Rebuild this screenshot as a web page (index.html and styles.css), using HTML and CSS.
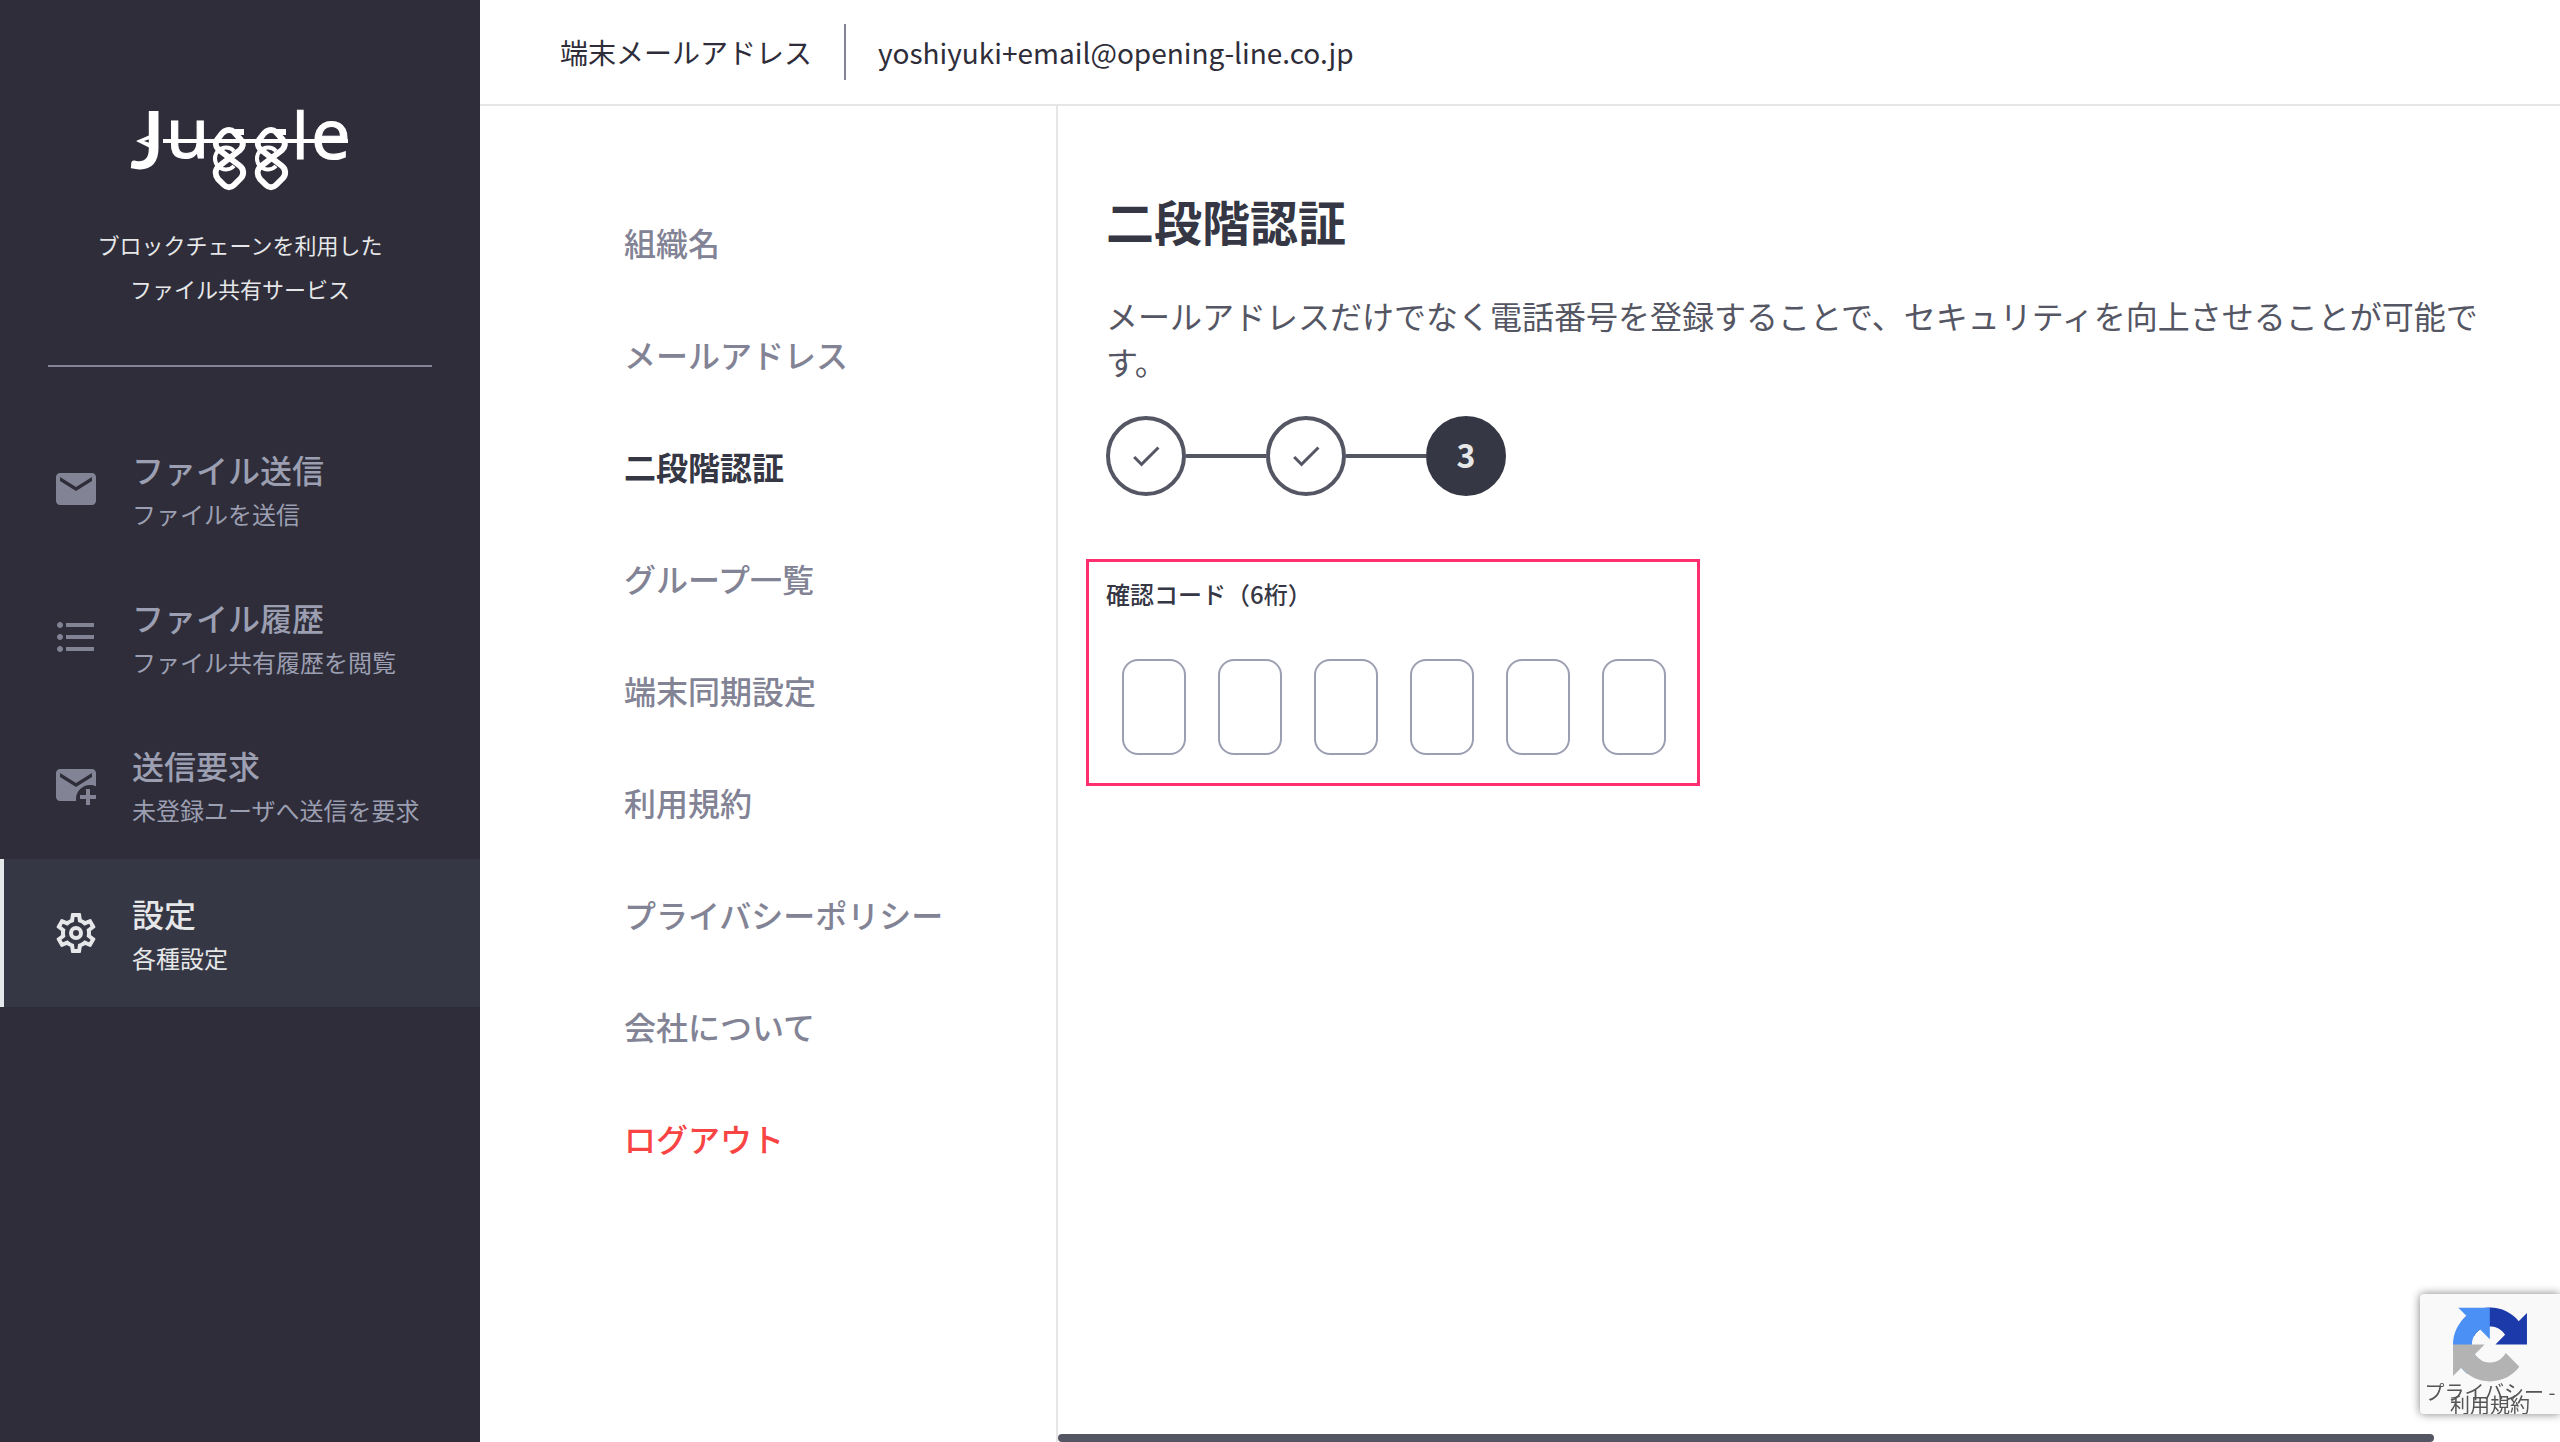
FILE: index.html
```html
<!DOCTYPE html>
<html lang="ja">
<head>
    <meta charset="UTF-8">
    <meta name="viewport" content="width=device-width, initial-scale=1.0">
    <title>Juggle</title>
    <link rel="stylesheet" href="styles.css">
</head>
<body>
    <!-- サイドバー -->
    <aside class="sidebar">
        <div class="brand">
            <svg class="logo" viewBox="0 0 220 84" role="img" aria-label="Juggle">
                <g class="logo-text">
                    <text class="logo-j" x="1" y="60">J</text>
                    <text x="36" y="50">u</text>
                    <text class="logo-l" x="162" y="51">l</text>
                    <text x="181" y="51">e</text>
                </g>
                <path fill="#fff" d="M6 33l14-6v4l-6 2 6 2v5z"/>
                <path fill="#fff" d="M33 31h185v4H33z"/>
                <g id="link" fill="none" stroke="#fff">
                    <path stroke-width="6" d="M114 24H103M99 22C95 22 92 25 90 28L87 32C85 35 86 39 88 41L110 58C114 61 114 67 111 70L104 77C101 80 97 80 94 77L88 71C85 67 85 62 88 59L110 42C113 39 114 35 111 32L104 24C102 22 101 22 99 22z"/>
                    <path stroke-width="4" d="M104 43a11 11 0 1 0 0 15"/>
                </g>
                <use href="#link" x="42"/>
            </svg>
            <p class="tagline">ブロックチェーンを利用した<br>ファイル共有サービス</p>
        </div>
        <nav class="main-nav">
            <a href="#" class="nav-item">
                <svg class="nav-icon" viewBox="0 0 24 24"><path d="M20 4H4c-1.100 0-1.990.9-1.990 2L2 18c0 1.100.9 2 2 2h16c1.100 0 2-.9 2-2V6c0-1.100-.9-2-2-2zm0 4l-8 5-8-5V6l8 5 8-5v2z"/></svg>
                <span class="nav-text">
                    <span class="nav-title">ファイル送信</span>
                    <span class="nav-desc">ファイルを送信</span>
                </span>
            </a>
            <a href="#" class="nav-item">
                <svg class="nav-icon" viewBox="0 0 24 24"><path d="M4 10.500c-.83 0-1.500.67-1.500 1.500s.67 1.500 1.500 1.500 1.500-.67 1.500-1.500-.67-1.500-1.500-1.500zm0-6c-.83 0-1.500.67-1.500 1.500S3.170 7.500 4 7.500 5.500 6.830 5.500 6 4.830 4.500 4 4.500zm0 12c-.83 0-1.500.68-1.500 1.500s.68 1.500 1.500 1.500 1.500-.68 1.500-1.500-.67-1.500-1.500-1.500zM7 19h14v-2H7v2zm0-6h14v-2H7v2zm0-8v2h14V5H7z"/></svg>
                <span class="nav-text">
                    <span class="nav-title">ファイル履歴</span>
                    <span class="nav-desc">ファイル共有履歴を閲覧</span>
                </span>
            </a>
            <a href="#" class="nav-item">
                <svg class="nav-icon" viewBox="0 0 24 24"><path d="M20 4H4c-1.100 0-2 .9-2 2v12c0 1.100.9 2 2 2h8.080c-.05-.33-.08-.66-.08-1 0-3.870 3.130-7 7-7 1.070 0 2.090.24 3 .68V6c0-1.100-.9-2-2-2zm0 4l-8 5-8-5V6l8 5 8-5v2zM19 14h-2v3h-3v2h3v3h2v-3h3v-2h-3z"/></svg>
                <span class="nav-text">
                    <span class="nav-title">送信要求</span>
                    <span class="nav-desc">未登録ユーザへ送信を要求</span>
                </span>
            </a>
            <a href="#" class="nav-item active">
                <svg class="nav-icon" viewBox="0 0 24 24"><path d="M19.430 12.980c.04-.32.07-.64.07-.98s-.03-.66-.07-.98l2.110-1.650c.19-.15.24-.42.12-.64l-2-3.460c-.09-.16-.26-.25-.44-.25-.06 0-.12.010-.17.030l-2.490 1c-.52-.4-1.080-.73-1.690-.98l-.38-2.650C14.460 2.180 14.250 2 14 2h-4c-.25 0-.46.18-.49.42l-.38 2.650c-.61.25-1.170.59-1.690.98l-2.490-1c-.06-.02-.12-.03-.18-.03-.17 0-.34.09-.43.25l-2 3.460c-.13.22-.07.49.12.64l2.110 1.650c-.04.32-.07.65-.07.98s.03.66.07.98l-2.110 1.650c-.19.15-.24.42-.12.64l2 3.460c.09.16.26.25.44.25.06 0 .12-.01.17-.03l2.490-1c.52.4 1.080.73 1.690.98l.38 2.650c.03.24.24.42.49.42h4c.25 0 .46-.18.49-.42l.38-2.650c.61-.25 1.170-.59 1.690-.98l2.490 1c.06.02.12.03.18.03.17 0 .34-.09.43-.25l2-3.460c.12-.22.07-.49-.12-.64l-2.110-1.650zm-1.980-1.710c.04.31.05.52.05.73 0 .21-.02.43-.05.73l-.14 1.130.89.7 1.080.84-.7 1.210-1.270-.51-1.040-.42-.9.68c-.43.32-.84.56-1.250.73l-1.060.43-.16 1.130-.2 1.350h-1.400l-.19-1.350-.16-1.130-1.060-.43c-.43-.18-.83-.41-1.230-.71l-.91-.7-1.060.43-1.270.51-.7-1.210 1.080-.84.89-.7-.14-1.130c-.03-.31-.05-.54-.05-.74s.02-.43.05-.73l.14-1.130-.89-.7-1.080-.84.7-1.210 1.270.51 1.040.42.9-.68c.43-.32.84-.56 1.250-.73l1.060-.43.16-1.130.2-1.350h1.390l.19 1.350.16 1.130 1.060.43c.43.18.83.41 1.230.71l.91.7 1.060-.43 1.270-.51.7 1.210-1.070.85-.89.7.14 1.130zM12 8.500A3.500 3.500 0 1 0 12 15.500 3.500 3.500 0 0 0 12 8.500zm0 5A1.500 1.500 0 1 1 12 10.500 1.500 1.500 0 0 1 12 13.500z"/></svg>
                <span class="nav-text">
                    <span class="nav-title">設定</span>
                    <span class="nav-desc">各種設定</span>
                </span>
            </a>
        </nav>
    </aside>

    <div class="page">
        <header class="topbar">
            <span class="topbar-label">端末メールアドレス</span>
            <span class="topbar-mail">yoshiyuki+email@opening-line.co.jp</span>
        </header>

        <div class="columns">
            <!-- 設定メニュー -->
            <nav class="settings-menu">
                <a href="#">組織名</a>
                <a href="#">メールアドレス</a>
                <a href="#" class="current">二段階認証</a>
                <a href="#">グループ一覧</a>
                <a href="#">端末同期設定</a>
                <a href="#">利用規約</a>
                <a href="#">プライバシーポリシー</a>
                <a href="#">会社について</a>
                <a href="#" class="logout">ログアウト</a>
            </nav>

            <main class="content">
                <div class="content-body">
                    <h1>二段階認証</h1>
                    <p class="lead">メールアドレスだけでなく電話番号を登録することで、セキュリティを向上させることが可能です。</p>

                    <ol class="steps">
                        <li class="step"><svg viewBox="0 0 24 24"><path d="M9 16.170L4.830 12l-1.420 1.410L9 19 21 7l-1.410-1.410z"/></svg></li>
                        <li class="step"><svg viewBox="0 0 24 24"><path d="M9 16.170L4.830 12l-1.420 1.410L9 19 21 7l-1.410-1.410z"/></svg></li>
                        <li class="step step-now">3</li>
                    </ol>

                    <!-- 確認コード入力 -->
                    <form class="code-form">
                        <label for="code-1">確認コード（6桁）</label>
                        <div class="code-inputs">
                            <input type="text" id="code-1" maxlength="1" aria-label="1桁目">
                            <input type="text" id="code-2" maxlength="1" aria-label="2桁目">
                            <input type="text" id="code-3" maxlength="1" aria-label="3桁目">
                            <input type="text" id="code-4" maxlength="1" aria-label="4桁目">
                            <input type="text" id="code-5" maxlength="1" aria-label="5桁目">
                            <input type="text" id="code-6" maxlength="1" aria-label="6桁目">
                        </div>
                    </form>
                </div>
                <div class="scrollbar"><div class="scrollbar-thumb"></div></div>
            </main>
        </div>
    </div>

    <!-- reCAPTCHA -->
    <div class="recaptcha">
        <svg class="recaptcha-logo" viewBox="0 0 64 64">
            <path fill="#1c3aa9" d="M64 31.955l-.033-1.370V4.687l-7.160 7.160C50.948 4.674 42.033.093 32.050.093c-10.400 0-19.622 4.960-25.458 12.640l11.736 11.860a15.550 15.550 0 0 1 4.754-5.334c2.050-1.600 4.952-2.906 8.968-2.906.485 0 .86.057 1.135.163 4.976.393 9.288 3.140 11.828 7.124l-8.307 8.307L64 31.953"/>
            <path fill="#4a90f5" d="M31.862.094l-1.370.033H4.594l7.160 7.160C4.580 13.147 0 22.060 0 32.046c0 10.400 4.960 19.622 12.640 25.458L24.500 45.768a15.550 15.550 0 0 1-5.334-4.754c-1.600-2.050-2.906-4.952-2.906-8.968 0-.485.057-.86.163-1.135.393-4.976 3.140-9.288 7.124-11.828l8.307 8.307L31.860.095"/>
            <path fill="#b3b3b3" d="M.001 32.045l.033 1.370v25.898l7.160-7.160c5.860 7.173 14.774 11.754 24.760 11.754 10.400 0 19.622-4.960 25.458-12.640l-11.736-11.860a15.550 15.550 0 0 1-4.754 5.334c-2.050 1.600-4.952 2.906-8.968 2.906-.485 0-.86-.057-1.135-.163-4.976-.393-9.288-3.140-11.828-7.124l8.307-8.307c-10.522.04-22.400.066-27.295-.005"/>
        </svg>
        <p class="recaptcha-links"><a href="#">プライバシー</a> - <a href="#">利用規約</a></p>
    </div>
</body>
</html>
```
FILE: styles.css
```css
* {
    margin: 0;
    padding: 0;
    box-sizing: border-box;
}

body {
    font-family: "Noto Sans CJK JP", sans-serif;
    background-color: #fff;
    color: #2e2d39;
    display: flex;
    height: 100vh;
    overflow: hidden;
}

a {
    color: inherit;
    text-decoration: none;
}

/* サイドバー */
.sidebar {
    width: 480px;
    flex-shrink: 0;
    background-color: #2e2d39;
}

.brand {
    margin: 0 48px;
    padding: 108px 0 55px;
    border-bottom: 2px solid #828395;
    text-align: center;
}

.logo {
    display: block;
    width: 220px;
    height: 84px;
    margin: 0 auto 30px;
}

.logo-text {
    font-family: "Noto Sans", sans-serif;
    font-size: 70px;
    fill: #fff;
    stroke: #fff;
}

.logo-l {
    font-size: 64px;
}

.logo-j {
    font-family: Lato, sans-serif;
    font-size: 78px;
    stroke-width: 2px;
}

.tagline {
    font-size: 22px;
    line-height: 44px;
    color: #e6e7e9;
}

.main-nav {
    margin-top: 48px;
}

.nav-item {
    display: flex;
    align-items: center;
    gap: 32px;
    height: 148px;
    padding-left: 52px;
    color: #9c9fb1;
}

.nav-icon {
    width: 48px;
    height: 48px;
    fill: #828395;
}

.nav-title,
.nav-desc {
    display: block;
}

.nav-title {
    font-size: 32px;
    line-height: 50px;
    font-weight: 500;
}

.nav-desc {
    font-size: 24px;
    line-height: 40px;
}

.nav-item.active {
    padding-left: 48px;
    border-left: 4px solid #e6e7e9;
    background-color: #363744;
    color: #e6e7e9;
}

.nav-item.active .nav-icon {
    fill: #e6e7e9;
}

/* ヘッダー */
.page {
    flex: 1;
    min-width: 0;
    display: flex;
    flex-direction: column;
}

.topbar {
    display: flex;
    align-items: center;
    height: 106px;
    padding-left: 80px;
    border-bottom: 2px solid #e6e6e6;
    font-size: 28px;
    line-height: 56px;
}

.topbar-label {
    padding-right: 32px;
    border-right: 2px solid #828395;
}

.topbar-mail {
    padding-left: 32px;
}

.columns {
    flex: 1;
    min-height: 0;
    display: flex;
}

/* 設定メニュー */
.settings-menu {
    width: 578px;
    flex-shrink: 0;
    padding: 80px 0 0 144px;
    border-right: 2px solid #e6e6e6;
    font-size: 32px;
    font-weight: 500;
    color: #828395;
}

.settings-menu a {
    display: block;
    line-height: 112px;
}

.settings-menu .current {
    color: #363744;
    font-weight: bold;
}

.settings-menu .logout {
    color: #f94444;
}

/* コンテンツ */
.content {
    flex: 1;
    min-width: 0;
    display: flex;
    flex-direction: column;
}

.content-body {
    flex: 1;
    padding: 79px 48px 0;
}

h1 {
    font-size: 48px;
    line-height: 70px;
    color: #363744;
}

.lead {
    margin-top: 37px;
    font-size: 32px;
    line-height: 46px;
    color: #555664;
}

.steps {
    display: flex;
    gap: 80px;
    margin-top: 32px;
    list-style: none;
}

.step {
    position: relative;
    display: flex;
    justify-content: center;
    align-items: center;
    width: 80px;
    height: 80px;
    border: 4px solid #555664;
    border-radius: 50%;
}

.step svg {
    width: 36px;
    height: 36px;
    fill: #555664;
}

.step + .step::before {
    content: "";
    position: absolute;
    right: 76px;
    width: 80px;
    height: 4px;
    background-color: #555664;
}

.step-now {
    border-color: #363744;
    background-color: #363744;
    color: #e6e7e9;
    font-size: 32px;
    line-height: 68px;
    align-items: flex-start;
}

.step-now {
    font-weight: bold;
}

.step.step-now::before {
    top: 34px;
}

.code-form {
    width: 614px;
    margin: 63px 0 0 -20px;
    padding: 14px 17px 28px;
    border: 3px solid #ff2e6e;
}

.code-form label {
    display: block;
    font-size: 24px;
    line-height: 36px;
    font-weight: 500;
    color: #363744;
}

.code-inputs {
    display: flex;
    gap: 32px;
    margin: 47px 16px 0;
}

.code-inputs input {
    width: 64px;
    height: 96px;
    border: 2px solid #9c9fb1;
    border-radius: 16px;
    background-color: #fff;
    text-align: center;
    font-size: 32px;
}

.scrollbar-thumb {
    width: calc(100% - 126px);
    height: 8px;
    border-radius: 4px;
    background-color: #555664;
}

/* reCAPTCHA */
.recaptcha {
    position: fixed;
    right: 0;
    bottom: 28px;
    width: 140px;
    height: 120px;
    padding-top: 13px;
    border-radius: 4px 0 0 4px;
    background-color: #f9f9f9;
    box-shadow: 0 0 10px #808080;
    overflow: hidden;
}

.recaptcha-logo {
    display: block;
    width: 74px;
    height: 75px;
    margin: 0 auto;
}

.recaptcha-links {
    margin-top: 3px;
    font-size: 20px;
    line-height: 13px;
    text-align: center;
    color: #555;
}
```
